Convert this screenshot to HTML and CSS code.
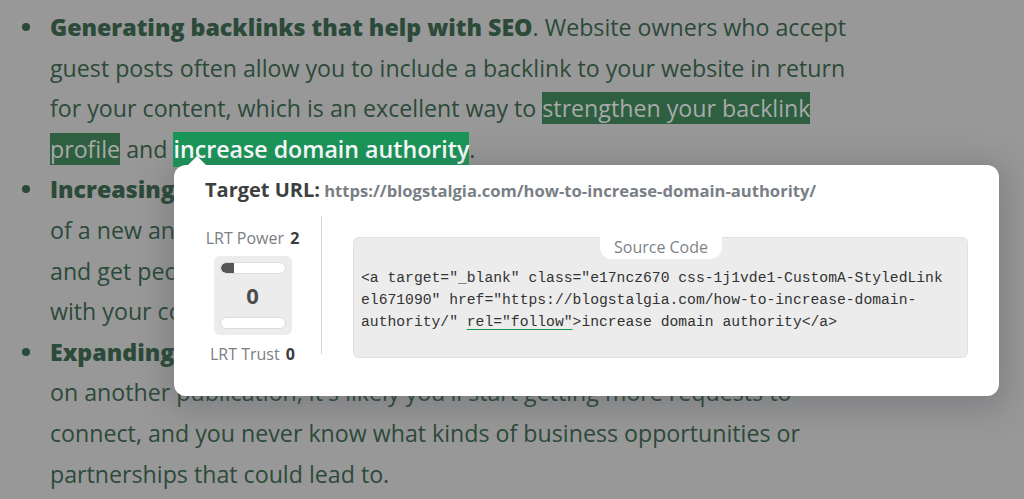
FILE: index.html
```html
<!DOCTYPE html>
<html lang="en">
<head>
<meta charset="utf-8">
<link rel="stylesheet" href="styles.css">
</head>
<body>
<div class="page">
  <ul class="list">
    <li><strong>Generating backlinks that help with SEO</strong>. Website owners who accept guest posts often allow you to include a backlink to your website in return for your content, which is an excellent way to <span class="hl-dim">strengthen your backlink profile</span> and <span class="hl-active">increase domain authority</span>.</li>
    <li><strong>Increasing brand awareness</strong>. Guest posting puts your brand right in front of a new and relevant audience. This helps you build credibility and trust, and get people truly interested in what you have to offer, so they engage with your content and keep coming back to your site for more.</li>
    <li><strong>Expanding your network</strong>. When you publish a valuable guest post<br>on another publication, it's likely you'll start getting more requests to connect, and you never know what kinds of business opportunities or partnerships that could lead to.</li>
  </ul>

  <div class="popup">
    <div class="popup-arrow"></div>
    <div class="popup-title"><span class="label">Target URL:</span> <span class="url">https://blogstalgia.com/how-to-increase-domain-authority/</span></div>
    <div class="popup-body">
      <div class="metrics">
        <div class="metric-label">LRT Power <b>2</b></div>
        <div class="gauge">
          <div class="bar"><div class="bar-fill"></div></div>
          <div class="gauge-value">0</div>
          <div class="bar"></div>
        </div>
        <div class="metric-label">LRT Trust <b>0</b></div>
      </div>
      <div class="divider"></div>
      <div class="code-box">
        <div class="code-tab">Source Code</div>
        <div class="code">&lt;a target="_blank" class="e17ncz670 css-1j1vde1-CustomA-StyledLink<br>el671090" href="https://blogstalgia.com/how-to-increase-domain-<br>authority/" <span class="rel">rel="follow"</span>&gt;increase domain authority&lt;/a&gt;</div>
      </div>
    </div>
  </div>
</div>
</body>
</html>
```

FILE: styles.css
```css
html, body {
  margin: 0;
  padding: 0;
}
body {
  background: #989898;
  font-family: "Open Sans", "Liberation Sans", sans-serif;
  width: 1024px;
  height: 499px;
  overflow: hidden;
}
.page {
  position: relative;
  width: 1024px;
  height: 499px;
}
.list {
  margin: 0;
  padding: 7px 0 0 50px;
  width: 825px;
  list-style: none;
  color: #2c4a39;
  font-size: 23.2px;
  line-height: 40.6px;
}
.list li {
  position: relative;
}
.list li::before {
  content: "";
  position: absolute;
  left: -28px;
  top: 16px;
  width: 8px;
  height: 8px;
  border-radius: 50%;
  background: #2c4a39;
}
.list strong {
  font-weight: 800;
}
.hl-dim {
  background: #2f5f41;
  color: #a9aaa9;
}
.hl-active {
  background: #1b9659;
  color: #ffffff;
  font-weight: 600;
  padding: 1px 0 2px;
}
.popup {
  position: absolute;
  left: 174px;
  top: 165px;
  width: 825px;
  height: 231px;
  box-sizing: border-box;
  background: #fff;
  border-radius: 12px;
  box-shadow: 0 6px 30px 8px rgba(60, 66, 78, 0.26);
  padding: 12px 31px 0 31px;
}
.popup-arrow {
  position: absolute;
  left: 13px;
  top: -9px;
  width: 0;
  height: 0;
  border-left: 10px solid transparent;
  border-right: 10px solid transparent;
  border-bottom: 10px solid #fff;
}
.popup-title {
  white-space: nowrap;
  line-height: 26px;
}
.popup-title .label {
  font-size: 20px;
  font-weight: 700;
  color: #3e3f40;
}
.popup-title .url {
  font-size: 16.6px;
  font-weight: 700;
  color: #7a7f86;
}
.popup-body {
  display: flex;
  align-items: flex-start;
  margin-top: 24px;
}
.metrics {
  width: 95px;
  display: flex;
  flex-direction: column;
  align-items: center;
}
.metric-label {
  font-size: 16px;
  color: #7b7e82;
  line-height: 20px;
  white-space: nowrap;
}
.metric-label b {
  color: #3a3b3c;
  font-weight: 700;
  margin-left: 2px;
}
.gauge {
  margin: 8px 0 9px;
  width: 78px;
  height: 79px;
  box-sizing: border-box;
  background: #ececec;
  border-radius: 6px;
  padding: 6px 6px 0;
  display: flex;
  flex-direction: column;
  align-items: center;
}
.bar {
  width: 66px;
  height: 12px;
  box-sizing: border-box;
  background: #fff;
  border: 1px solid #d4dde4;
  border-radius: 6px;
  overflow: hidden;
}
.bar-fill {
  width: 13px;
  height: 100%;
  background: #555;
  border-radius: 6px 0 0 6px;
}
.gauge-value {
  font-size: 22px;
  font-weight: 700;
  color: #4a4c4e;
  line-height: 43px;
}
.divider {
  width: 1px;
  background: #d3d6da;
  margin: -12px 0 0 21px;
  height: 138px;
}
.code-box {
  position: relative;
  margin: 9px 0 0 31px;
  width: 615px;
  height: 121px;
  box-sizing: border-box;
  background: #ececec;
  border: 1px dotted #d0d6da;
  border-radius: 6px;
  padding: 29px 0 0 7px;
}
.code-tab {
  position: absolute;
  left: 246px;
  top: -1px;
  width: 122px;
  height: 22px;
  background: #fff;
  border-radius: 0 0 12px 12px;
  text-align: center;
  font-size: 16px;
  line-height: 21px;
  color: #7e8388;
}
.code {
  font-family: "Liberation Mono", "DejaVu Sans Mono", monospace;
  font-size: 14.7px;
  line-height: 22px;
  color: #333;
  white-space: nowrap;
}
.rel {
  text-decoration: underline;
  text-decoration-color: #1b9659;
  text-underline-offset: 3px;
}
```
